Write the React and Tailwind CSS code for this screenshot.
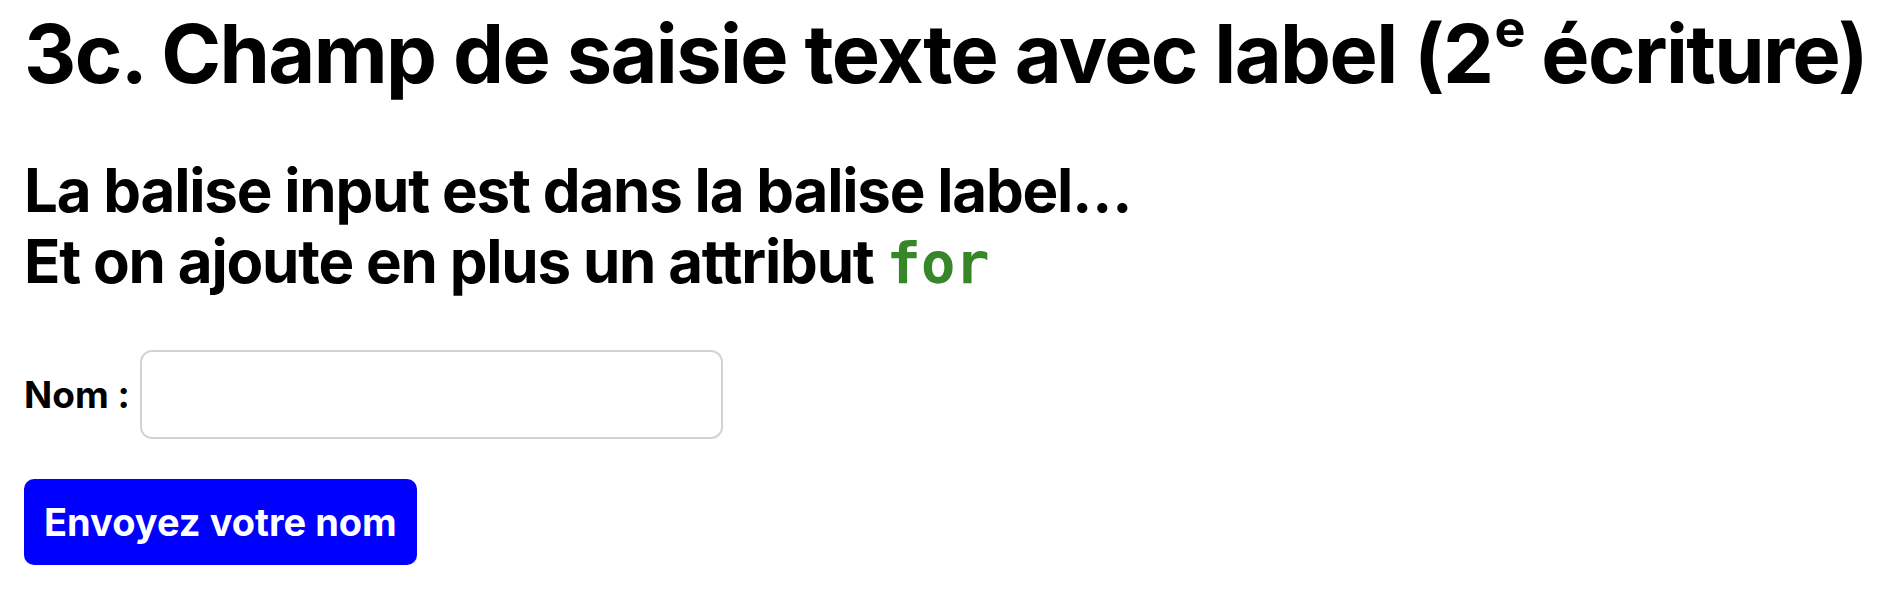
import React from 'react';

const App = () => {
  return (
    <div className="min-h-screen bg-white pl-[24px] pr-[4px] pt-[2px] text-black font-['Inter',sans-serif]">
      {/* Title */}
      <h1 className="text-[81px] leading-[104px] font-bold tracking-[-0.02em] whitespace-nowrap">
        3c. Champ de saisie texte avec label (2<span className="ml-[2px] align-[36px] text-[52px] leading-none">e</span> écriture)
      </h1>

      {/* Subtitle */}
      <h2 className="mt-[49px] text-[60px] leading-[71px] font-bold tracking-[-0.02em]">
        La balise input est dans la balise label…
        <br />
        Et on ajoute en plus un attribut{' '}
        <code className="font-['DejaVu_Sans_Mono',monospace] text-[57px] font-bold tracking-normal text-[#38862a]">for</code>
      </h2>

      {/* Form */}
      <form onSubmit={(e) => e.preventDefault()}>
        <label htmlFor="nom" className="mt-[51px] flex items-center gap-[10px] text-[37px] font-bold">
          Nom :
          <input
            id="nom"
            type="text"
            className="h-[89px] w-[583px] rounded-[12px] border-2 border-[#d3d3d3] bg-white px-3 outline-none"
          />
        </label>

        <button
          type="submit"
          className="mt-[40px] h-[86px] rounded-[10px] bg-[#0000ff] px-[20px] text-[38px] font-bold text-white"
        >
          Envoyez votre nom
        </button>
      </form>
    </div>
  );
};

export default App;
